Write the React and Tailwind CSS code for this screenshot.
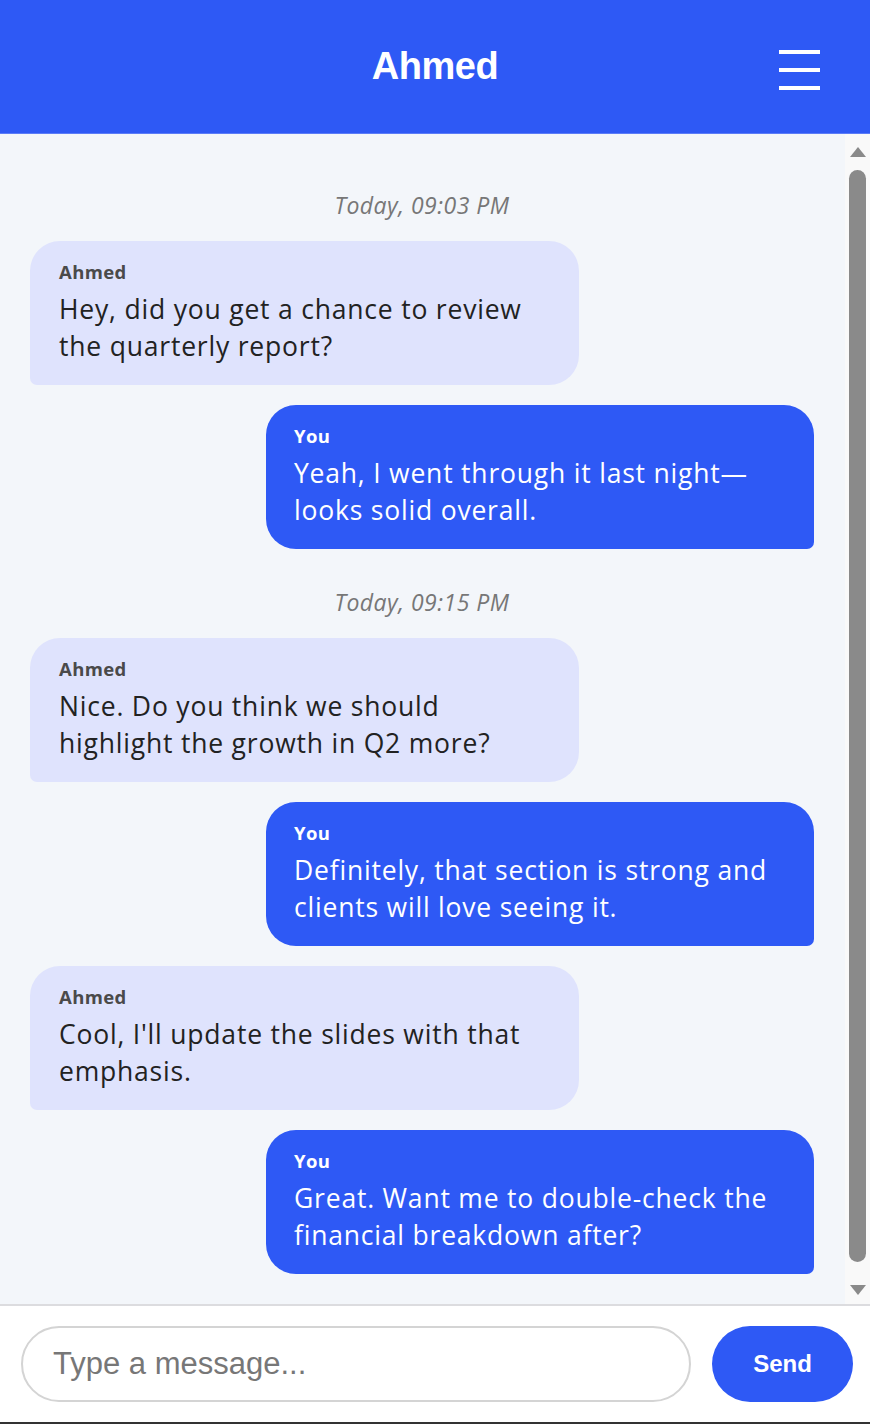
import React from 'react';

const messages = [
    { type: 'time', text: 'Today, 09:03 PM' },
    { type: 'in', text: 'Hey, did you get a chance to review the quarterly report?' },
    { type: 'out', text: 'Yeah, I went through it last night—looks solid overall.' },
    { type: 'time', text: 'Today, 09:15 PM' },
    { type: 'in', text: 'Nice. Do you think we should highlight the growth in Q2 more?' },
    { type: 'out', text: 'Definitely, that section is strong and clients will love seeing it.' },
    { type: 'in', text: "Cool, I'll update the slides with that emphasis." },
    { type: 'out', text: 'Great. Want me to double-check the financial breakdown after?' },
];

const Bubble = ({ msg }) => {
    const mine = msg.type === 'out';
    return (
        <div className={mine ? 'flex justify-end' : 'flex justify-start'}>
            <div
                className={
                    mine
                        ? 'w-[548px] h-[144px] bg-[#2e59f5] text-white rounded-[30px] rounded-br-[7px] pl-[28px] pr-[28px] pt-[20px]'
                        : 'w-[549px] h-[144px] bg-[#dfe3fd] text-[#222] rounded-[30px] rounded-bl-[7px] pl-[29px] pr-[28px] pt-[20px]'
                }
            >
                <div className={mine ? 'text-[18.5px] font-bold leading-[22px] tracking-[0.4px] text-white' : 'text-[18.5px] font-bold leading-[22px] tracking-[0.4px] text-[#4a4a4a]'}>
                    {mine ? 'You' : 'Ahmed'}
                </div>
                <p className="mt-[8px] text-[26.5px] leading-[37px] tracking-[0.8px]">{msg.text}</p>
            </div>
        </div>
    );
};

export default function App() {
    return (
        <div className="w-[870px] h-[1424px] flex flex-col bg-white border-b-2 border-[#333]" style={{ fontFamily: '"Open Sans", Lato, sans-serif' }}>
            {/* Header */}
            <header className="h-[134px] shrink-0 bg-[#2e59f5] relative flex items-center justify-center border-b border-[#5b7cf7]">
                <h1 className="text-white text-[38px] font-semibold tracking-[-0.5px]" style={{ fontFamily: '"Liberation Sans", Arial, sans-serif' }}>
                    Ahmed
                </h1>
                <button className="absolute right-[50px] top-[50px] flex flex-col gap-[14px]">
                    <span className="block w-[41px] h-[4px] bg-white" />
                    <span className="block w-[41px] h-[4px] bg-white" />
                    <span className="block w-[41px] h-[4px] bg-white" />
                </button>
            </header>

            {/* Messages + scrollbar */}
            <div className="flex-1 flex min-h-0 bg-[#f3f6fa]">
                <div className="flex-1 pl-[30px] pr-[31px] pt-[38px] flex flex-col gap-[20px]">
                    {messages.map((m, i) =>
                        m.type === 'time' ? (
                            <div key={i} className="text-center italic text-[23px] text-[#777] pt-[18px] pb-[1px] leading-[30px] tracking-[0.5px]">
                                {m.text}
                            </div>
                        ) : (
                            <Bubble key={i} msg={m} />
                        )
                    )}
                </div>
                <div className="w-[25px] shrink-0 bg-[#f9f9f9] flex flex-col items-center pt-[12px] pb-[8px]">
                    <svg width="18" height="12" viewBox="0 0 18 12">
                        <path d="M9 1 L17 11 L1 11 Z" fill="#8a8a8a" />
                    </svg>
                    <div className="w-[17px] flex-1 mt-[12px] mb-[22px] rounded-full bg-[#8a8a8a]" />
                    <svg width="18" height="12" viewBox="0 0 18 12">
                        <path d="M1 1 L17 1 L9 11 Z" fill="#8a8a8a" />
                    </svg>
                </div>
            </div>

            {/* Composer */}
            <div className="h-[118px] shrink-0 border-t-2 border-[#dcdcdf] bg-white flex items-center gap-[21px] pl-[21px] pr-[17px]" style={{ fontFamily: '"Liberation Sans", Arial, sans-serif' }}>
                <input
                    type="text"
                    placeholder="Type a message..."
                    className="flex-1 h-[76px] rounded-full border-2 border-[#d4d4d4] px-[30px] text-[31px] text-[#333] placeholder:text-[#777] outline-none"
                />
                <button className="w-[141px] h-[76px] rounded-full bg-[#2e59f5] text-white text-[24px] font-bold">
                    Send
                </button>
            </div>
        </div>
    );
}
